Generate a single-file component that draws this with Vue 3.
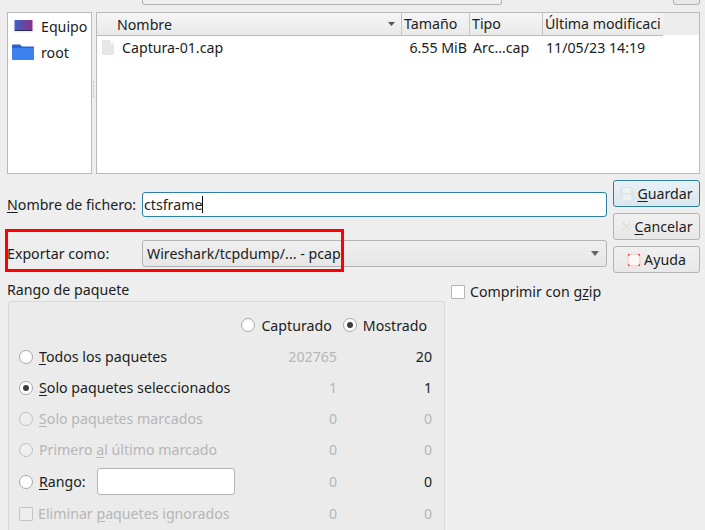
<script setup>
const rows = [
  { key: 'T', rest: 'odos los paquetes', radio: 'off', a: '202765', b: '20', bOn: true },
  { key: 'S', rest: 'olo paquetes seleccionados', radio: 'on', a: '1', b: '1', bOn: true },
  { key: 'S', rest: 'olo paquetes marcados', radio: 'off', dis: true, a: '0', b: '0' },
  { pre: 'Primero ', key: 'a', rest: 'l último marcado', radio: 'off', dis: true, a: '0', b: '0' },
]
</script>

<template>
  <div class="dialog">
    <div class="topstrip">
      <div class="topcombo"></div>
      <div class="topbtn"></div>
    </div>

    <div class="browser">
      <aside class="sidebar">
        <div class="place">
          <svg class="placeicon" width="22" height="18" viewBox="0 0 22 18">
            <defs>
              <linearGradient id="scr" x1="0" y1="0" x2="1" y2="0">
                <stop offset="0" stop-color="#3a62c9" />
                <stop offset="1" stop-color="#8f2f84" />
              </linearGradient>
            </defs>
            <rect x="2.5" y="3" width="18" height="10" fill="url(#scr)" />
            <rect x="2.5" y="13" width="18" height="1" fill="#2c2a50" />
            <rect x="1" y="14" width="21" height="1.5" fill="#ececec" />
          </svg>
          <span>Equipo</span>
        </div>
        <div class="place">
          <svg class="placeicon" width="22" height="18" viewBox="0 -1 22 18">
            <path d="M0 1.5Q0 .5 1 .5H8L10 2.5H21Q22 2.5 22 3.5V6H0Z" fill="#2a62c8" />
            <path d="M0 5Q0 4 1 4H21Q22 4 22 5V15Q22 16 21 16H1Q0 16 0 15Z" fill="#3b82f0" />
          </svg>
          <span>root</span>
        </div>
      </aside>

      <div class="grip"><i></i></div>

      <section class="list">
        <div class="head">
          <div class="hcell name">
            <span>Nombre</span>
            <svg class="sort" width="7" height="4" viewBox="0 0 7 4"><path d="M0 0H7L3.5 4Z" fill="#555" /></svg>
          </div>
          <div class="hcell size">Tamaño</div>
          <div class="hcell type">Tipo</div>
          <div class="hcell date">Última modificaci</div>
        </div>
        <div class="filerow">
          <div class="cell name">
            <svg width="12" height="15" viewBox="0 0 12 15"><path d="M0 0H8L12 4V15H0Z" fill="#e6e6e6" /><path d="M8 0L12 4H8Z" fill="#f6f6f6" /></svg>
            <span>Captura-01.cap</span>
          </div>
          <div class="cell size">6.55 MiB</div>
          <div class="cell type">Arc…cap</div>
          <div class="cell date">11/05/23 14:19</div>
        </div>
      </section>
    </div>

    <div class="controls">
      <div class="fields">
        <div class="field namefield">
          <label><u>N</u>ombre de fichero:</label>
          <div class="textinput">ctsframe<span class="caret"></span></div>
        </div>
        <div class="field exportfield">
          <label>Exportar como:</label>
          <div class="combo">
            <span>Wireshark/tcpdump/... - pcap</span>
            <svg width="8" height="5" viewBox="0 0 8 5"><path d="M0 0H8L4 5Z" fill="#666" /></svg>
          </div>
          <div class="highlight"></div>
        </div>
      </div>
      <div class="buttons">
        <button class="btn primary">
          <svg width="14" height="14" viewBox="0 0 14 14"><path d="M0 0H11L14 3V14H0Z" fill="#dfe5e9" /><rect x="3" y="1" width="8" height="5" fill="#eef1f3" /><rect x="3" y="8" width="8" height="5" fill="#eef1f3" /></svg>
          <span><u>G</u>uardar</span>
        </button>
        <button class="btn">
          <svg width="11" height="11" viewBox="0 0 11 11"><path d="M1.5 1.5L9.5 9.5M9.5 1.5L1.5 9.5" stroke="#e2e2e2" stroke-width="2" /></svg>
          <span><u>C</u>ancelar</span>
        </button>
        <button class="btn">
          <svg width="14" height="14" viewBox="0 0 14 14">
            <rect x="0" y="0" width="14" height="14" rx="2" fill="#f6dcdc" />
            <rect x="2" y="2" width="10" height="10" fill="#fdf8f8" />
            <path d="M1 1H3.5L1 3.5ZM13 1H10.5L13 3.5ZM1 13H3.5L1 10.5ZM13 13H10.5L13 10.5Z" fill="#f04a4a" />
          </svg>
          <span>Ayuda</span>
        </button>
      </div>
    </div>

    <div class="lower">
      <div class="rangecol">
        <div class="rangetitle">Rango de paquete</div>
        <div class="group">
          <div class="toggle">
            <span class="radio"></span><span class="tlabel">Capturado</span>
            <span class="radio on"></span><span>Mostrado</span>
          </div>
          <div class="row" v-for="(r, i) in rows" :key="i" :class="{ dis: r.dis }">
            <span class="radio" :class="{ on: r.radio === 'on' }"></span>
            <span class="rlabel">{{ r.pre }}<u>{{ r.key }}</u>{{ r.rest }}</span>
            <span class="count a">{{ r.a }}</span>
            <span class="count b" :class="{ strong: r.bOn }">{{ r.b }}</span>
          </div>
          <div class="row rangorow">
            <span class="radio"></span>
            <span class="rlabel rango"><u>R</u>ango:</span>
            <div class="rangeinput"></div>
            <span class="count a muted">0</span>
            <span class="count b strong">0</span>
          </div>
          <div class="row dis last">
            <span class="check small"></span>
            <span class="rlabel ign">Eliminar <u>p</u>aquetes ignorados</span>
            <span class="count a">0</span>
            <span class="count b">0</span>
          </div>
        </div>
      </div>
      <div class="gzip">
        <span class="check"></span>
        <span>Comprimir con g<u>z</u>ip</span>
      </div>
    </div>
  </div>
</template>

<style>
html, body { margin: 0; background: #eeeeee; overflow: hidden; }
</style>

<style scoped>
.dialog {
  width: 705px;
  height: 530px;
  box-sizing: border-box;
  padding: 0 5px 0 7px;
  overflow: hidden;
  background: #eeeeee;
  color: #1a1d21;
  font-family: "Noto Sans", sans-serif;
  font-size: 14.2px;
  line-height: 19px;
}
u { text-underline-offset: 2px; }

.topstrip { height: 12px; display: flex; align-items: flex-start; }
.topcombo {
  height: 5px; width: 360px; margin-left: 135px; box-sizing: border-box;
  border: 1px solid #b4b4b4; border-top: 0; border-radius: 0 0 3px 3px; background: #efefef;
}
.topbtn {
  height: 5px; width: 27px; margin-left: 171px; box-sizing: border-box;
  border: 1px solid #b4b4b4; border-top: 0; border-radius: 0 0 3px 3px; background: #e8e8e8;
}

.browser { display: flex; height: 162px; }
.sidebar {
  width: 85px; box-sizing: border-box; background: #fff; border: 1px solid #b9b9b9;
  overflow: hidden;
}
.place { display: flex; align-items: center; height: 26px; white-space: nowrap; }
.placeicon { margin-left: 4px; margin-right: 7px; flex: none; }
.grip { width: 4px; display: flex; align-items: center; justify-content: center; }
.grip i { width: 1px; height: 16px; margin-top: -8px; border-left: 1px dotted #bdbdbd; }
.list {
  flex: 1; box-sizing: border-box; border: 1px solid #b9b9b9;
  background: linear-gradient(#ececec 0 22px, #fff 22px);
}
.head {
  display: flex; height: 23px; box-sizing: border-box;
  background: linear-gradient(#f5f5f5, #e9e9e9);
  width: 566px;
}
.hcell {
  box-sizing: border-box; height: 23px; border-right: 1px solid #c4c4c4;
  border-bottom: 1px solid #b9b9b9; padding: 1px 0 0 6px; white-space: nowrap; overflow: hidden;
}
.hcell.name {
  width: 305px; padding-left: 20px; display: flex; align-items: center; justify-content: space-between; padding-right: 6px; padding-top: 0;
}
.hcell.size { width: 68px; padding-left: 2px; }
.hcell.type { width: 73px; padding-left: 2px; }
.hcell.date { width: 120px; padding-left: 2px; border-right: 0; }
.filerow { display: flex; height: 23px; align-items: center; box-sizing: border-box; }
.cell { white-space: nowrap; }
.cell.name { width: 305px; display: flex; align-items: center; gap: 8px; padding-left: 5px; box-sizing: border-box; }
.cell.size { width: 68px; text-align: right; box-sizing: border-box; padding-right: 3px; }
.cell.type { width: 73px; box-sizing: border-box; padding-left: 3px; }
.cell.date { width: 120px; box-sizing: border-box; padding-left: 3px; }

.controls { display: flex; margin-top: 6px; justify-content: space-between; }
.fields { width: 600px; padding-top: 12px; }
.field { display: flex; align-items: center; height: 27px; position: relative; }
.namefield { height: 25px; }
.exportfield { margin-top: 23px; }
.field label { width: 135px; flex: none; white-space: nowrap; }
.textinput {
  flex: 1; height: 25px; box-sizing: border-box; background: #fff;
  border: 1px solid #2e7fa8; border-radius: 3px; padding: 2px 0 0 1px;
  display: flex; align-items: flex-start; line-height: 19px;
}
.caret { width: 1px; height: 17px; background: #000; margin-top: 1px; }
.combo {
  flex: 1; height: 27px; box-sizing: border-box; border: 1px solid #b4b4b4; border-radius: 3px;
  background: linear-gradient(#efefef, #e6e6e6);
  display: flex; align-items: center; justify-content: space-between; padding: 0 7px 0 4px;
}
.highlight {
  position: absolute; left: -2px; top: -11px; width: 339px; height: 43px; box-sizing: border-box;
  border: 3px solid #ff0000;
}
.buttons { width: 87px; display: flex; flex-direction: column; gap: 6px; }
.btn {
  height: 27px; box-sizing: border-box; border: 1px solid #b4b4b4; border-radius: 3px; padding: 0;
  background: linear-gradient(#f0f0f0, #e8e8e8);
  color: inherit; font: inherit; display: flex; align-items: center; justify-content: center; gap: 3px;
}
.btn.primary { border-color: #2e7fa8; background: linear-gradient(#e8f1f6, #d9e7ef); }

.lower { display: flex; margin-top: 7px; }
.rangecol { width: 438px; }
.rangetitle { height: 19px; margin-bottom: 2px; }
.group {
  margin-left: 1px; height: 240px; box-sizing: border-box; padding: 11px 12px 0 10px;
  border: 1px solid #d8d8d8; border-radius: 3px 3px 0 0; background: #ebebeb;
}
.toggle { display: flex; align-items: center; justify-content: flex-end; height: 24px; padding-right: 5px; margin-bottom: 4px; }
.tlabel { margin-right: 11px; }
.toggle .radio { margin-right: 6px; }
.row { display: flex; align-items: center; height: 31px; }
.rangorow { height: 33px; }
.row.dis { color: #b6b6b6; }
.radio {
  width: 14px; height: 14px; flex: none; box-sizing: border-box; border: 1px solid #a8a8a8;
  border-radius: 50%; background: #fff; position: relative;
}
.radio.on::after {
  content: ""; position: absolute; left: 3px; top: 3px; width: 6px; height: 6px;
  border-radius: 50%; background: #3c3c3c;
}
.dis .radio { background: #eeeeee; border-color: #c0c0c0; }
.rlabel { margin-left: 6px; white-space: nowrap; flex: 1; }
.rlabel.rango { flex: none; width: 58px; }
.rlabel.ign { margin-left: 5px; }
.check {
  width: 14px; height: 14px; flex: none; box-sizing: border-box; border: 1px solid #b4b4b4;
  background: #fff; border-radius: 1px; display: inline-block;
}
.check.small { background: #eeeeee; border-color: #c4c4c4; }
.rangeinput {
  width: 138px; height: 27px; box-sizing: border-box; background: #fff; border: 1px solid #b4b4b4; border-radius: 3px;
}
.count { text-align: right; color: #b6b6b6; flex: none; }
.count.a { width: 100px; }
.rangeinput + .count.a { width: 102px; }
.count.b { width: 95px; }
.count.strong { color: #1a1d21; }
.gzip { display: flex; align-items: center; gap: 5px; margin-left: 6px; margin-top: 2px; height: 19px; }
</style>
